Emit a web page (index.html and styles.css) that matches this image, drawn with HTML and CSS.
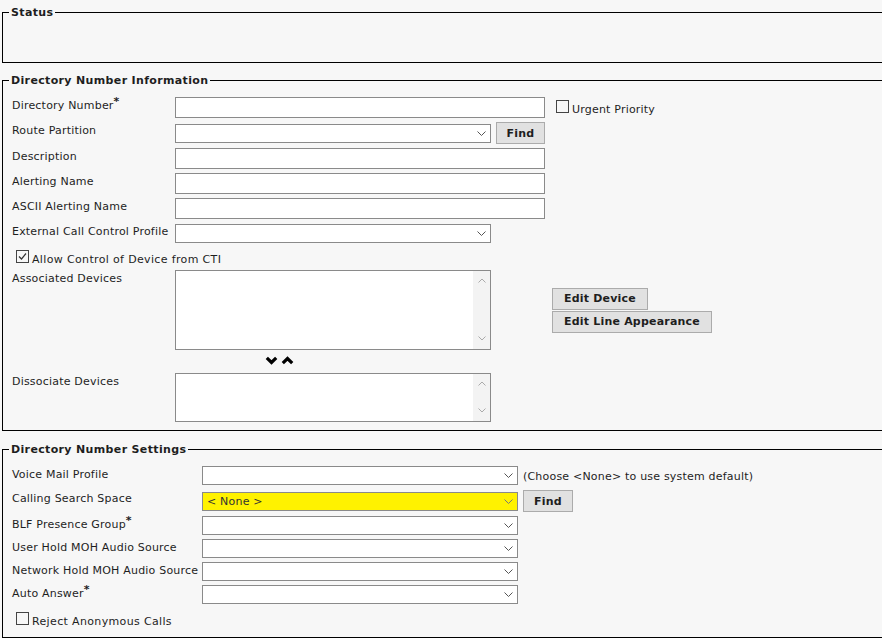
FILE: index.html
```html
<!DOCTYPE html>
<html lang="en">
<head>
<meta charset="utf-8">
<title>Directory Number Configuration</title>
<link rel="stylesheet" href="styles.css">
</head>
<body>
<div class="page">

  <fieldset class="box box-status">
    <legend>Status</legend>
    <div class="status-body"></div>
  </fieldset>

  <fieldset class="box box-dni">
    <legend>Directory Number Information</legend>
    <div class="rows">
      <div class="row">
        <label class="lbl">Directory Number<span class="req">*</span></label>
        <div class="ctl"><input class="text" type="text"></div>
        <div class="extra extra-check"><span class="chk"></span>Urgent Priority</div>
      </div>
      <div class="row">
        <label class="lbl">Route Partition</label>
        <div class="ctl">
          <div class="select"><span class="sel-text"></span><svg class="caret" width="9" height="5" viewBox="0 0 9 5"><polyline points="0.5,0.5 4.5,4.5 8.5,0.5" fill="none" stroke="#555" stroke-width="1"/></svg></div>
          <button class="btn btn-find" type="button">Find</button>
        </div>
      </div>
      <div class="row">
        <label class="lbl">Description</label>
        <div class="ctl"><input class="text" type="text"></div>
      </div>
      <div class="row">
        <label class="lbl">Alerting Name</label>
        <div class="ctl"><input class="text" type="text"></div>
      </div>
      <div class="row">
        <label class="lbl">ASCII Alerting Name</label>
        <div class="ctl"><input class="text" type="text"></div>
      </div>
      <div class="row">
        <label class="lbl">External Call Control Profile</label>
        <div class="ctl">
          <div class="select"><span class="sel-text"></span><svg class="caret" width="9" height="5" viewBox="0 0 9 5"><polyline points="0.5,0.5 4.5,4.5 8.5,0.5" fill="none" stroke="#555" stroke-width="1"/></svg></div>
        </div>
      </div>
      <div class="check-row check-row-cti">
        <span class="chk"><svg width="11" height="11" viewBox="0 0 11 11"><polyline points="2,5.5 4.5,8 9,2.5" fill="none" stroke="#333" stroke-width="1.2"/></svg></span>Allow Control of Device from CTI
      </div>
      <div class="row">
        <label class="lbl">Associated Devices</label>
        <div class="ctl">
          <div class="listbox listbox-tall">
            <div class="track">
              <svg width="8" height="5" viewBox="0 0 8 5"><polyline points="0.5,4.5 4,1 7.5,4.5" fill="none" stroke="#aaa" stroke-width="1"/></svg>
              <svg width="8" height="5" viewBox="0 0 8 5"><polyline points="0.5,0.5 4,4 7.5,0.5" fill="none" stroke="#aaa" stroke-width="1"/></svg>
            </div>
          </div>
        </div>
        <div class="extra btn-stack">
          <button class="btn" type="button">Edit Device</button>
          <button class="btn" type="button">Edit Line Appearance</button>
        </div>
      </div>
      <div class="row row-arrows">
        <span class="lbl"></span>
        <div class="ctl arrows">
          <svg width="13" height="9" viewBox="0 0 13 9"><polyline points="1.8,1.8 6.5,6.5 11.2,1.8" fill="none" stroke="#000" stroke-width="3.2"/></svg>
          <svg width="13" height="9" viewBox="0 0 13 9"><polyline points="1.8,7.2 6.5,2.5 11.2,7.2" fill="none" stroke="#000" stroke-width="3.2"/></svg>
        </div>
      </div>
      <div class="row">
        <label class="lbl">Dissociate Devices</label>
        <div class="ctl">
          <div class="listbox listbox-short">
            <div class="track">
              <svg width="8" height="5" viewBox="0 0 8 5"><polyline points="0.5,4.5 4,1 7.5,4.5" fill="none" stroke="#aaa" stroke-width="1"/></svg>
              <svg width="8" height="5" viewBox="0 0 8 5"><polyline points="0.5,0.5 4,4 7.5,0.5" fill="none" stroke="#aaa" stroke-width="1"/></svg>
            </div>
          </div>
        </div>
      </div>
    </div>
  </fieldset>

  <fieldset class="box box-dns">
    <legend>Directory Number Settings</legend>
    <div class="rows rows-dns">
      <div class="row row-first">
        <label class="lbl">Voice Mail Profile</label>
        <div class="ctl">
          <div class="select"><span class="sel-text"></span><svg class="caret" width="9" height="5" viewBox="0 0 9 5"><polyline points="0.5,0.5 4.5,4.5 8.5,0.5" fill="none" stroke="#555" stroke-width="1"/></svg></div>
          <span class="hint">(Choose &lt;None&gt; to use system default)</span>
        </div>
      </div>
      <div class="row">
        <label class="lbl">Calling Search Space</label>
        <div class="ctl">
          <div class="select select-hl"><span class="sel-text">&lt; None &gt;</span><svg class="caret" width="9" height="5" viewBox="0 0 9 5"><polyline points="0.5,0.5 4.5,4.5 8.5,0.5" fill="none" stroke="#777" stroke-width="1"/></svg></div>
          <button class="btn btn-find" type="button">Find</button>
        </div>
      </div>
      <div class="row">
        <label class="lbl">BLF Presence Group<span class="req">*</span></label>
        <div class="ctl">
          <div class="select"><span class="sel-text"></span><svg class="caret" width="9" height="5" viewBox="0 0 9 5"><polyline points="0.5,0.5 4.5,4.5 8.5,0.5" fill="none" stroke="#555" stroke-width="1"/></svg></div>
        </div>
      </div>
      <div class="row">
        <label class="lbl">User Hold MOH Audio Source</label>
        <div class="ctl">
          <div class="select"><span class="sel-text"></span><svg class="caret" width="9" height="5" viewBox="0 0 9 5"><polyline points="0.5,0.5 4.5,4.5 8.5,0.5" fill="none" stroke="#555" stroke-width="1"/></svg></div>
        </div>
      </div>
      <div class="row">
        <label class="lbl">Network Hold MOH Audio Source</label>
        <div class="ctl">
          <div class="select"><span class="sel-text"></span><svg class="caret" width="9" height="5" viewBox="0 0 9 5"><polyline points="0.5,0.5 4.5,4.5 8.5,0.5" fill="none" stroke="#555" stroke-width="1"/></svg></div>
        </div>
      </div>
      <div class="row">
        <label class="lbl">Auto Answer<span class="req">*</span></label>
        <div class="ctl">
          <div class="select"><span class="sel-text"></span><svg class="caret" width="9" height="5" viewBox="0 0 9 5"><polyline points="0.5,0.5 4.5,4.5 8.5,0.5" fill="none" stroke="#555" stroke-width="1"/></svg></div>
        </div>
      </div>
      <div class="check-row check-row-reject">
        <span class="chk"></span>Reject Anonymous Calls
      </div>
    </div>
  </fieldset>

</div>
</body>
</html>
```

FILE: styles.css
```css
html, body {
  margin: 0;
  padding: 0;
  background: #f7f7f7;
  overflow: hidden;
}

body {
  font-family: "DejaVu Sans", Verdana, sans-serif;
  font-size: 11px;
  line-height: 13px;
  letter-spacing: 0.2px;
  color: #1e1e1e;
}

.page {
  width: 900px;
  padding: 6px 0 0 2px;
}

.box {
  margin: 0;
  border: 1px solid #000;
  padding: 10px 0 8px 9px;
  min-width: 0;
}

.box legend {
  font-weight: bold;
  letter-spacing: 0.35px;
  padding: 0 2px;
  margin-left: -3px;
  line-height: 13px;
  color: #1e1e1e;
}

.box-dni { margin-top: 11px; }
.box-dns { margin-top: 12px; padding-bottom: 9px; }

.status-body { height: 25px; }

.rows {
  display: flex;
  flex-direction: column;
  gap: 4px;
}

.row {
  display: flex;
  align-items: center;
  min-height: 21px;
}

.rows-dns .row { min-height: 19px; }
.rows-dns .row-first { min-height: 20px; align-items: flex-start; }

.lbl {
  flex: none;
  width: 163px;
  align-self: flex-start;
  padding-top: 2px;
  white-space: nowrap;
}

.rows-dns .lbl { width: 190px; }

.req {
  font-weight: bold;
  vertical-align: 4px;
  line-height: 0;
}

.ctl {
  flex: none;
  width: 370px;
  display: flex;
  align-items: center;
  gap: 5px;
}

.rows-dns .ctl { width: auto; }
.rows-dns .row-first .ctl { align-items: flex-start; }

.extra { margin-left: 7px; }

.extra-check {
  align-self: flex-start;
  padding-top: 3px;
  white-space: nowrap;
}

.text {
  box-sizing: border-box;
  width: 370px;
  height: 21px;
  margin: 0;
  border: 1px solid #8a8a8a;
  background: #fff;
  padding: 0 3px;
  font: inherit;
}

.select {
  box-sizing: border-box;
  flex: none;
  width: 316px;
  height: 19px;
  border: 1px solid #8a8a8a;
  background: #fff;
  display: flex;
  align-items: center;
  justify-content: space-between;
  padding: 0 4px 0 4px;
  color: #333;
}

.select-hl { background: #fff200; }

.caret { display: block; flex: none; }

.hint {
  white-space: nowrap;
  align-self: center;
  margin-top: 1px;
}

.btn {
  box-sizing: border-box;
  height: 22px;
  margin: 0;
  padding: 0 11px;
  border: 1px solid #ababab;
  border-radius: 0;
  background: #e1e1e1;
  font: inherit;
  font-weight: bold;
  letter-spacing: 0.2px;
  color: #1e1e1e;
  white-space: nowrap;
}

.btn-find {
  width: 50px;
  padding: 0;
  text-align: center;
}

.btn-stack {
  display: flex;
  flex-direction: column;
  align-items: flex-start;
  gap: 1px;
}

.check-row {
  white-space: nowrap;
  letter-spacing: 0.35px;
}

.check-row-cti { margin-top: 2px; }
.check-row-reject { margin-top: 4px; }

.chk {
  display: inline-block;
  box-sizing: border-box;
  width: 13px;
  height: 13px;
  margin: 0 3px 0 4px;
  border: 1px solid #444;
  background: transparent;
  vertical-align: baseline;
}

.chk svg { display: block; }

.listbox {
  box-sizing: border-box;
  width: 316px;
  border: 1px solid #8a8a8a;
  background: #fff;
  display: flex;
  justify-content: flex-end;
}

.listbox-tall { height: 80px; }
.listbox-short { height: 49px; }

.track {
  width: 17px;
  background: #f3f3f3;
  display: flex;
  flex-direction: column;
  justify-content: space-between;
  align-items: center;
  padding: 7px 0 8px;
}

.track svg { display: block; }

.row-arrows {
  min-height: 15px;
  align-items: flex-start;
}

.arrows {
  height: 15px;
  align-items: flex-start;
  gap: 3px;
  padding-left: 90px;
  box-sizing: border-box;
}

.arrows svg {
  display: block;
  margin-top: 2px;
}
```
